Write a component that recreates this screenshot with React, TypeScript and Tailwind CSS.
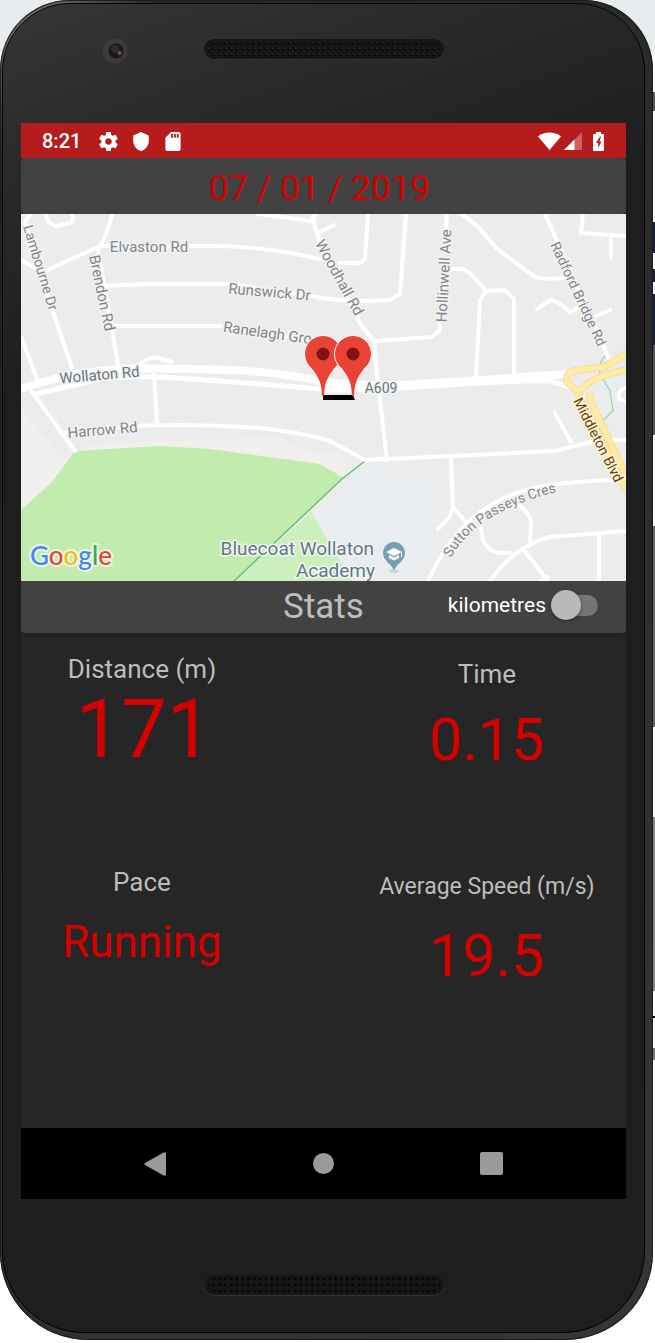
import { useState } from "react";

const road = "#ffffff";

function Status() {
  return (
    <div className="flex h-[35px] items-center justify-between bg-[#b71c1c] px-[21px] pt-px text-white">
      <div className="flex items-center gap-[14px]">
        <span className="mr-1 text-[20px] leading-6 font-medium">8:21</span>
        <svg viewBox="2 2 20 20" className="size-[19px]" fill="currentColor" aria-hidden="true">
          <path d="M19.43 12.98c.04-.32.07-.64.07-.98s-.03-.66-.07-.98l2.11-1.65c.19-.15.24-.42.12-.64l-2-3.46c-.12-.22-.39-.3-.61-.22l-2.49 1c-.52-.4-1.08-.73-1.69-.98l-.38-2.65C14.46 2.18 14.25 2 14 2h-4c-.25 0-.46.18-.49.42l-.38 2.65c-.61.25-1.17.59-1.69.98l-2.49-1c-.23-.09-.49 0-.61.22l-2 3.46c-.13.22-.07.49.12.64l2.11 1.65c-.04.32-.07.65-.07.98s.03.66.07.98l-2.11 1.65c-.19.15-.24.42-.12.64l2 3.46c.12.22.39.3.61.22l2.49-1c.52.4 1.08.73 1.69.98l.38 2.65c.03.24.24.42.49.42h4c.25 0 .46-.18.49-.42l.38-2.65c.61-.25 1.17-.59 1.69-.98l2.49 1c.23.09.49 0 .61-.22l2-3.46c.12-.22.07-.49-.12-.64l-2.11-1.65zM12 15.500c-1.930 0-3.500-1.570-3.500-3.500s1.570-3.500 3.500-3.500 3.500 1.570 3.500 3.500-1.570 3.500-3.500 3.500z" />
        </svg>
        <svg viewBox="3 1 18 22" className="h-[19px] w-[18px]" fill="currentColor" aria-hidden="true">
          <path d="M12 1 3 5v6c0 5.550 3.840 10.740 9 12 5.160-1.260 9-6.450 9-12V5z" />
        </svg>
        <svg viewBox="4 2 16 20" className="h-[19px] w-[18px]" fill="currentColor" aria-hidden="true">
          <path fillRule="evenodd" d="M18 2h-8L4 8v12c0 1.100.9 2 2 2h12c1.100 0 2-.9 2-2V4c0-1.100-.9-2-2-2zm-6 6h-2V4h2v4zm3 0h-2V4h2v4zm3 0h-2V4h2v4z" />
        </svg>
      </div>
      <div className="flex items-center">
        <svg viewBox="0 0 23 18" className="mr-[3px] h-[18px] w-[23px]" fill="currentColor" aria-hidden="true">
          <path d="M0 4.500C3.500 1.500 7.500.5 11.500.5S19.500 1.500 23 4.500L11.500 18z" />
        </svg>
        <svg viewBox="0 0 18 18" className="mr-[11px] size-[18px]" fill="currentColor" aria-hidden="true">
          <path d="M0 18 18 0v18z" opacity=".3" />
          <path d="M0 18 10.500 7.500V18z" />
        </svg>
        <svg viewBox="0 0 11 19" className="mr-px h-[19px] w-[11px]" fill="currentColor" aria-hidden="true">
          <path fillRule="evenodd" d="M3 0h5v2h2q1 0 1 1v15q0 1-1 1H1q-1 0-1-1V3q0-1 1-1h2zM7 4.500 3 11H5.200V16L8.500 9.500H6.500L8 4.500z" />
        </svg>
      </div>
    </div>
  );
}

function Pin({ x }: { x: number }) {
  return (
    <g transform={`translate(${x} 396)`}>
      <path
        d="M0 0C-2-16-7-21-12-28a18.500 18.500 0 0 1-6.500-14 18.500 18.500 0 0 1 37 0A18.500 18.500 0 0 1 12-28C7-21 2-16 0 0z"
        fill="#ea4335"
        stroke="#fff"
        strokeWidth="1"
      />
      <path d="M-6-20C-2-14-1.500-8-1 0H1C1.500-8 2-14 6-20z" fill="#ea4335" />
      <circle cy="-42" r="6.500" fill="#811411" />
    </g>
  );
}

function MapView() {
  return (
    <svg
      viewBox="21 214 605 367"
      className="block h-auto w-full bg-[#ececec]"
      role="img"
      aria-label="Map of the route along Wollaton Rd"
    >
      <rect x="21" y="214" width="605" height="367" fill="#ececec" />
      <path d="M21 408 62 460 90 444 280 437 300 450 345 455V520L21 560z" fill="#f1f0ee" />
      <path d="M362 461 410 478 430 482V545L420 581H310V512z" fill="#e9edf0" />
      <path d="M21 510 52 482 75 451 160 446 210 449 320 464 344 478 235 581H21z" fill="#c1ecae" />
      <path d="M311 512 352 581H235z" fill="#cbf0bd" />
      <path d="M600 378 626 366V440L606 400z" fill="#e9edf0" />
      <path d="M233 582 342 479 365 461" fill="none" stroke="#6cbf7c" strokeWidth="1.500" />
      <path d="M606 355Q598 362 600 374L610 391 613 411 603 420" fill="none" stroke="#a0d3a5" strokeWidth="1.200" />

      <g fill="none" stroke={road} strokeLinejoin="round" strokeLinecap="round" strokeWidth="4">
        <path d="M112 214C109 230 104 240 98 250L118 364" />
        <path d="M21 260 43 272 100 246H215C250 246 285 251 325 260" />
        <path d="M46 214Q47 224 56 226L70 223Q75 220 72 214M31 214 25 222 34 256 72 368" />
        <path d="M103 286 145 284H230L331 299" />
        <path d="M108 326H220L320 342" />
        <path d="M21 337 39 384" />
        <path d="M140 364Q148 357 158 358L172 362" />
        <path d="M21 389C80 368 130 367 170 369C240 368 290 374 325 382 380 390 440 382 568 374" strokeWidth="8" />
        <path d="M36 394 100 379C135 374 180 377 330 390 400 392 480 379 550 381L568 387" strokeWidth="5" />
        <path d="M32 392 75 451M154 374 157 424" />
        <path d="M61 434Q140 420 260 428Q300 432 330 441L365 460 555 451 598 440H626" />
        <path d="M258 214 312 221 315 215M313 216Q315 232 321 244L361 325 374 341 377 375 387 460M320 232 334 225" />
        <path d="M368 214 365 258Q363 264 356 263L340 263" />
        <path d="M406 214 400 294 390 300Q350 302 320 298" />
        <path d="M447 214 446 227M440 318V330L432 337 376 341" />
        <path d="M448 269H463L470 273 486 291 505 290 514 299V372M486 291 480 300 476 376" />
        <path d="M461 214C485 228 491 246 500 251L535 277Q541 280 565 278" />
        <path d="M537 309 551 300Q561 302 570 313L585 302M596 316 610 310" />
        <path d="M545 214 609 359M583 214 581 233 626 236M611 236V258" />
        <path d="M555 413 571 442" />
        <path d="M451 459 453 507 449 518 438 529M453 507 468 525" />
        <path d="M428 581C440 555 460 520 500 500 530 484 570 482 626 479" />
        <path d="M481 528 483 540Q487 550 498 553H510M519 505Q532 515 531 525L530 544" />
        <path d="M490 581C502 564 520 545 549 537L626 531M524 550 548 581M599 535V581M541 581 548 577" />
        <path d="M626 388Q617 391 619 399L626 402" />
      </g>

      <g fill="none" strokeLinejoin="round">
        <path d="M626 354 604 367 573 371Q565 373 567 382L576 390 626 490M580 391Q590 377 626 370M590 392 591 402 626 476" stroke="#f5d98b" strokeWidth="7" />
        <path d="M626 354 604 367 573 371Q565 373 567 382L576 390 626 490M580 391Q590 377 626 370M590 392 591 402 626 476" stroke="#ffeba3" strokeWidth="5.500" />
      </g>

      <g
        fill="#80868b"
        stroke="#f3f3f3"
        strokeWidth="3"
        strokeLinejoin="round"
        paintOrder="stroke"
        fontSize="15"
        fontFamily="Roboto, sans-serif"
        textAnchor="middle"
      >
        <text x="149" y="252">Elvaston Rd</text>
        <text transform="translate(36 269) rotate(73)" fontSize="14">Lambourne Dr</text>
        <text transform="translate(97 294) rotate(78)">Brendon Rd</text>
        <text transform="translate(269 297) rotate(5)">Runswick Dr</text>
        <text transform="translate(267 338) rotate(8)">Ranelagh Gro</text>
        <text transform="translate(335 280) rotate(61)">Woodhall Rd</text>
        <text transform="translate(449 276) rotate(-87)">Hollinwell Ave</text>
        <text transform="translate(574 296) rotate(65)" fontSize="14">Radford Bridge Rd</text>
        <text transform="translate(100 380) rotate(-5)" fill="#6b777d">Wollaton Rd</text>
        <text transform="translate(103 435) rotate(-5)">Harrow Rd</text>
        <text x="381" y="393" fill="#6b777d" fontSize="14">A609</text>
        <text transform="translate(594 442) rotate(63)" fontSize="14" fill="#6e3c0a" stroke="#fff7df">Middleton Blvd</text>
        <path id="sutton-street" d="M451 558C466 530 500 504 566 490" fill="none" stroke="none" />
        <text textAnchor="start" fontSize="14"><textPath href="#sutton-street">Sutton Passeys Cres</textPath></text>
      </g>

      <path d="M323 395H353L355 400H323z" fill="#000" />
      <Pin x={323} />
      <Pin x={353} />

      <g
        fill="#5f7785"
        stroke="#f2f7f2"
        strokeWidth="3"
        strokeLinejoin="round"
        paintOrder="stroke"
        fontSize="19"
        fontFamily="Roboto, sans-serif"
        textAnchor="end"
      >
        <text x="374" y="555">Bluecoat Wollaton</text>
        <text x="375" y="577">Academy</text>
      </g>
      <ellipse cx="394" cy="571" rx="5" ry="2" fill="#d0d5d8" />
      <path d="M394 571C392 564 383 561 383 553A11 11 0 0 1 405 553C405 561 396 564 394 571z" fill="#78a0b2" />
      <path d="M394 548 386 552 394 556 401 552.500V557H402V552zM389 555V558L394 560.500 399 558V555L394 557.500z" fill="#fff" />

      <text
        x="30"
        y="565"
        fontSize="26"
        fontWeight="500"
        fontFamily="Lato, sans-serif"
        stroke="#e9f7e3"
        strokeWidth="4"
        strokeLinejoin="round"
        paintOrder="stroke"
      >
        <tspan fill="#4285f4">G</tspan>
        <tspan fill="#ea4335">o</tspan>
        <tspan fill="#fbbc05">o</tspan>
        <tspan fill="#4285f4">g</tspan>
        <tspan fill="#34a853">l</tspan>
        <tspan fill="#ea4335">e</tspan>
      </text>
    </svg>
  );
}

function UnitSwitch() {
  const [metric, setMetric] = useState(false);
  return (
    <label className="flex cursor-pointer items-center gap-[5px] text-[21px] leading-6 text-white">
      kilometres
      <span className="relative flex h-[30px] w-[47px] items-center">
        <input
          type="checkbox"
          role="switch"
          checked={metric}
          onChange={(e) => setMetric(e.target.checked)}
          className="peer ml-1 h-[21px] w-[43px] appearance-none rounded-full bg-[#757575]"
        />
        <span className="pointer-events-none absolute left-0 size-[30px] rounded-full bg-[#b9b9b9] shadow-[0_1px_3px_rgba(0,0,0,0.5)] peer-checked:left-[17px]" />
      </span>
    </label>
  );
}

function Speaker({ id, dot }: { id: string; dot: string }) {
  return (
    <svg viewBox="0 0 242 22" className="block h-[22px] w-[242px]" aria-hidden="true">
      <defs>
        <pattern id={id} x="2" y="2" width="5.800" height="6" patternUnits="userSpaceOnUse">
          <circle cx="3" cy="3" r="1.400" fill="#030303" />
          <circle cx="3.500" cy="2.300" r=".7" fill={dot} />
        </pattern>
      </defs>
      <rect x="1" y="1.500" width="240" height="20" rx="10" fill="#141414" stroke="#3b3b3b" strokeWidth=".8" />
      <rect x="1" y="1" width="240" height="19.500" rx="9.750" fill="#161616" />
      <rect x="5" y="2" width="232" height="18" rx="7" fill={`url(#${id})`} />
    </svg>
  );
}

function Stats() {
  return (
    <dl className="flex h-[495px] justify-between text-center text-[#bdbdbd]">
      <div className="flex w-2/5 flex-col pt-5">
        <dt className="text-[26px] leading-8">Distance (m)</dt>
        <dd className="mb-[92px] pt-px pl-1 text-[81px] leading-[88px] text-[#d50000]">171</dd>
        <dt className="mb-4 text-[26px] leading-8">Pace</dt>
        <dd className="text-[44px] leading-14 text-[#d50000]">Running</dd>
      </div>
      <div className="flex w-[46%] flex-col pt-[25px]">
        <dt className="mb-[14px] text-[26px] leading-8">Time</dt>
        <dd className="mb-[95px] text-[59px] leading-[72px] text-[#d50000]">0.15</dd>
        <dt className="mb-[17px] text-[23px] leading-8">Average Speed (m/s)</dt>
        <dd className="text-[59px] leading-[72px] text-[#d50000]">19.5</dd>
      </div>
    </dl>
  );
}

export default function App() {
  return (
    <div className="flex min-h-[1343px] items-start bg-[linear-gradient(#e7ecef_52px,#fff_52px)] font-[Roboto,sans-serif]">
      <div className="min-w-0 flex-1 rounded-t-[70px] rounded-b-[88px] bg-[linear-gradient(135deg,#858585,#2a2a2a_8%,#2c2a2b_40%,#383536)] pt-[3px] pr-2 pb-[7px] pl-[2px] shadow-[inset_0_0_1px_1px_#1c1c1c]">
        <div className="flex flex-col rounded-t-[68px] rounded-b-[82px] border border-black bg-[linear-gradient(160deg,#363638,#2b2b2b_10%,#1e1e1e_25%,#1e1e1e)] px-[18px]">
          <div className="grid h-[119px] grid-cols-[1fr_auto_1fr] items-start pt-[34px]">
            <svg viewBox="0 0 26 26" className="ml-[81px] size-[26px]" aria-hidden="true">
              <circle cx="13" cy="13" r="12.500" fill="#3b3b3b" />
              <circle cx="14" cy="13" r="7.500" fill="#1b181d" />
              <circle cx="13" cy="11" r="4" fill="#302a38" />
              <circle cx="17.500" cy="15" r="2" fill="#76505a" />
            </svg>
            <Speaker id="top-holes" dot="#444" />
          </div>
          <div className="bg-[#262626]">
            <Status />
            <header className="flex h-14 items-center justify-center rounded-sm bg-[#424242] pt-[5px] pr-2 shadow-md">
              <h1 className="text-[35px] leading-10 text-[#d50000]">07 / 01 / 2019</h1>
            </header>
            <MapView />
            <div className="grid h-[52px] grid-cols-[1fr_auto_1fr] items-center rounded-b-sm bg-[#424242] shadow-md">
              <h2 className="col-start-2 text-[35px] leading-10 text-[#bdbdbd]">Stats</h2>
              <div className="mr-7 justify-self-end pb-1">
                <UnitSwitch />
              </div>
            </div>
            <Stats />
            <nav className="grid h-[71px] grid-cols-3 items-center bg-black px-[50px] text-[#9a9a9a]">
              <button type="button" aria-label="Back" className="justify-self-center">
                <svg viewBox="0 0 22 24" className="h-6 w-[22px]" fill="currentColor">
                  <path d="M1 11 19.500.5Q22-.5 22 2V22Q22 24.500 19.500 23.500L1 13Q-.5 12 1 11z" />
                </svg>
              </button>
              <button type="button" aria-label="Home" className="size-[21px] justify-self-center rounded-full bg-[#9a9a9a]" />
              <button type="button" aria-label="Recent apps" className="size-[23px] justify-self-center rounded-[2px] bg-[#9a9a9a]" />
            </nav>
          </div>
          <div className="flex h-[133px] items-start justify-center pt-[75px]">
            <Speaker id="bottom-holes" dot="#0a0a0a" />
          </div>
        </div>
      </div>
      <div className="flex w-[2px] flex-col">
        <span className="mt-[92px] h-[19px] bg-[#555]" />
        <span className="mt-[111px] h-[31px] bg-[#1a2238]" />
        <span className="mt-4 h-[13px] bg-[#1a2238]" />
        <span className="mt-3 h-[51px] bg-[#1a2238]" />
        <span className="h-[90px] bg-[#555]" />
        <span className="mt-[91px] h-[201px] bg-[#666]" />
        <span className="mt-[90px] h-[174px] bg-[#888]" />
        <span className="mt-[25px] h-[2px] bg-black" />
        <span className="mt-[30px] h-3 bg-[#777]" />
      </div>
    </div>
  );
}
